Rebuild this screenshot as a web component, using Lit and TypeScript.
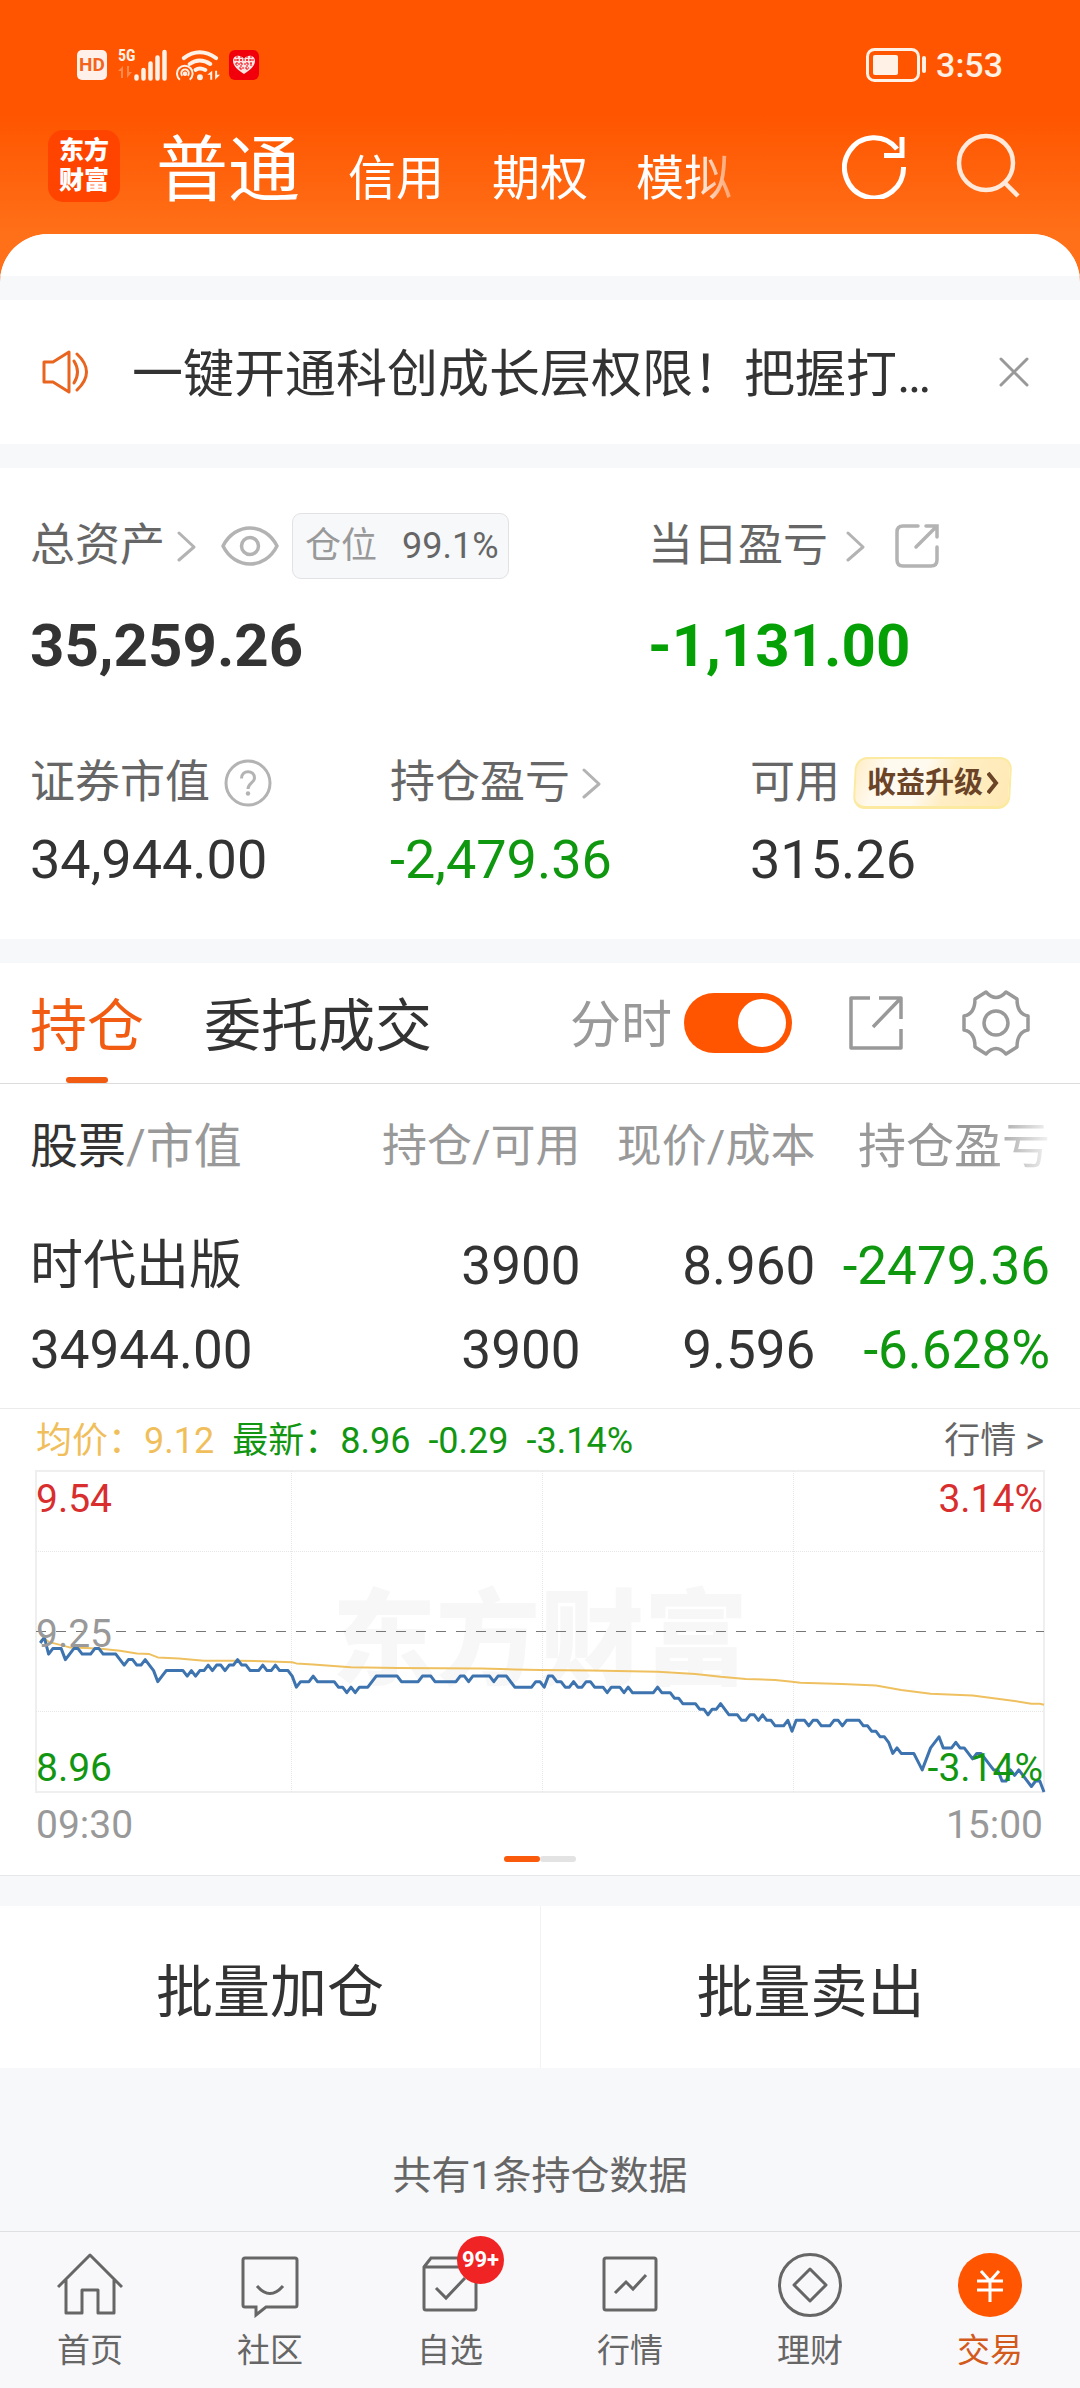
import { LitElement, html, svg, css } from "lit";
import { customElement, state } from "lit/decorators.js";

type Point = [minute: number, centsBelow: number];

/* Price line: trading minute, and cents below the previous close of 9.25. */
const PRICE: Point[] = [
  [1, 2], [2, 1], [3, 4], [4, 3], [6, 3], [7, 5], [8, 4], [9, 3], [10, 3], [11, 4], [13, 4], [14, 3], [15, 3], [16, 4],
  [19, 4], [21, 6], [22, 5], [23, 5], [24, 6], [25, 6], [26, 5], [27, 6], [28, 7], [29, 9], [30, 8], [31, 7], [35, 7],
  [36, 8], [37, 7], [38, 8], [39, 7], [40, 7], [41, 6], [42, 7], [43, 6], [44, 6], [45, 7], [46, 6], [47, 6], [48, 5],
  [49, 6], [50, 6], [51, 7], [53, 7], [54, 6], [55, 7], [56, 7], [57, 6], [58, 7], [60, 7], [61, 8], [62, 10], [63, 9],
  [65, 9], [66, 8], [67, 9], [71, 9], [72, 10], [73, 10], [74, 11], [75, 10], [76, 11], [77, 10], [79, 10], [81, 8],
  [86, 8], [87, 9], [91, 9], [92, 8], [94, 8], [95, 9], [100, 9], [101, 8], [102, 8], [103, 9], [104, 8], [108, 8],
  [109, 9], [110, 8], [112, 8], [114, 10], [118, 10], [119, 9], [120, 9], [121, 10], [122, 8], [123, 8], [124, 9],
  [125, 9], [126, 10], [127, 10], [128, 9], [129, 10], [130, 10], [131, 9], [132, 9], [133, 10], [135, 10], [136, 11],
  [137, 10], [139, 10], [140, 11], [141, 10], [142, 11], [147, 11], [148, 10], [149, 11], [151, 11], [152, 12],
  [153, 12], [154, 13], [157, 13], [158, 14], [159, 14], [160, 15], [161, 14], [162, 14], [163, 13], [165, 15],
  [167, 15], [168, 16], [169, 16], [170, 15], [171, 15], [172, 16], [173, 15], [174, 16], [175, 16], [176, 17],
  [178, 17], [179, 16], [180, 18], [181, 16], [183, 16], [184, 17], [185, 16], [186, 16], [187, 17], [189, 17],
  [190, 16], [191, 16], [192, 17], [193, 16], [196, 16], [197, 17], [198, 17], [199, 18], [200, 18], [201, 19],
  [202, 19], [203, 20], [204, 22], [205, 21], [206, 22], [209, 22], [211, 25], [213, 21], [215, 19], [216, 21],
  [218, 21], [219, 20], [220, 21], [221, 21], [223, 23], [224, 22], [225, 22], [227, 24], [228, 25], [229, 25],
  [230, 27], [231, 27], [232, 25], [233, 26], [234, 25], [235, 26], [237, 28], [238, 27], [239, 27], [240, 29],
];

const AVERAGE: Point[] = [
  [1, 1.6], [2, 1.2], [3, 1.8], [8, 2.8], [12, 2.9], [16, 3.1], [20, 3.4], [24, 3.9], [27, 4], [29, 4.6], [34, 4.8],
  [40, 5.2], [48, 5.2], [54, 5.3], [61, 5.5], [62, 5.7], [66, 5.9], [70, 6.1], [75, 6.4], [86, 6.5], [106, 6.6],
  [114, 6.8], [120, 6.9], [132, 7], [148, 7.2], [157, 7.6], [163, 8.1], [169, 8.5], [176, 8.7], [180, 9], [182, 9.2],
  [192, 9.4], [200, 9.7], [206, 10.5], [213, 11.2], [223, 11.5], [228, 12], [233, 12.5], [237, 13], [239, 13],
  [240, 13.2],
];

const CHART_W = 1008;
const CHART_H = 322;
const toPoints = (line: Point[]) =>
  line
    .map(([m, c]) => `${((m / 240) * CHART_W).toFixed(1)},${(CHART_H / 2 + (c / 29) * (CHART_H / 2 - 1)).toFixed(1)}`)
    .join(" ");

const shared = css`
  * {
    box-sizing: border-box;
  }
  button {
    appearance: none;
    border: 0;
    margin: 0;
    padding: 0;
    background: none;
    font: inherit;
    color: inherit;
    text-align: inherit;
    display: flex;
    align-items: center;
  }
  a {
    color: inherit;
    text-decoration: none;
  }
  svg {
    display: block;
    flex: none;
    fill: none;
    stroke: currentColor;
  }
`;

const chevron = html`<svg width="19" height="31" viewBox="0 0 19 31" color="#b3b3b3" stroke-width="3" stroke-linecap="round" stroke-linejoin="round" aria-hidden="true"><path d="M2 2 17 16 2 29" /></svg>`;

@customElement("status-bar")
class StatusBar extends LitElement {
  static styles = [
    shared,
    css`
      :host {
        display: flex;
        align-items: center;
        justify-content: space-between;
        height: 130px;
        padding: 0 77px;
        color: #fff1e6;
      }
      .group {
        display: flex;
        align-items: center;
        gap: 8px;
      }
      .time {
        font-size: 34px;
        line-height: 40px;
        font-weight: 500;
      }
      .hd {
        display: grid;
        place-items: center;
        width: 30px;
        height: 30px;
        border-radius: 5px;
        background: #fff1e9;
        color: #f4631d;
        font-size: 19px;
        line-height: 30px;
        font-weight: 700;
      }
      .cell {
        display: grid;
        grid-template-columns: 16px 34px;
        height: 32px;
        margin-left: 3px;
      }
      .net {
        font: 700 16px/14px "Roboto Condensed", Roboto, sans-serif;
      }
      .bars {
        grid-row: 1 / 3;
        grid-column: 2;
      }
    `,
  ];

  render() {
    return html`
      <div class="group">
        <span class="hd">HD</span>
        <span class="cell">
          <span class="net">5G</span>
          <svg class="bars" width="34" height="32" viewBox="0 0 34 32" stroke-width="4.5" stroke-linecap="round" aria-label="信号">
            <path d="M2.500 27.500v2M9.500 21v8.500M16.500 14.500v15M23.500 8.500v21M30.500 3v26.500" />
          </svg>
          <svg width="16" height="12" viewBox="0 0 16 12" color="#ff8a4d" aria-hidden="true">
            <path fill="#ff8a4d" stroke="none" d="M5 0v12H3V5H0zM9 0v12l5-6h-3V0z" />
          </svg>
        </span>
        <svg width="45" height="32" viewBox="0 0 46 32" aria-label="无线网络">
          <g stroke-width="4" stroke-linecap="round">
            <path d="M8 9Q24-3 41 9M14 15Q24 8 35 15M20 21Q24 18 30 21" />
          </g>
          <circle cx="24.500" cy="28.500" r="3" fill="currentColor" stroke="none" />
          <g stroke-width="2">
            <path d="M4 31A8 8 0 1 1 14 31M6.500 27A3.800 3.800 0 1 1 12 27" />
            <circle cx="9.200" cy="25" r="1.300" fill="currentColor" />
          </g>
          <path d="M37 22v9h-2v-5h-3zM40 22v9l5-5h-3v-4z" fill="currentColor" stroke="none" />
        </svg>
        <svg width="30" height="30" viewBox="0 0 30 30" aria-hidden="true">
          <rect width="30" height="30" rx="6" fill="#f1000b" stroke="none" />
          <path d="M15 24C9 20 4 16 4 11c0-6 8-7 11-2 3-5 11-4 11 2 0 5-5 9-11 13z" fill="#fbe3e2" stroke="none" />
          <path d="M8 6v10M12 6v15M18 6v15M22 6v10M5 10h20M6 14h18M10 18h10" stroke="#f1000b" stroke-width="1" stroke-dasharray="2 1" />
        </svg>
      </div>
      <div class="group">
        <svg width="62" height="34" viewBox="0 0 62 34" aria-label="电量">
          <rect x="1.500" y="1.500" width="51" height="31" rx="7" stroke-width="3" />
          <rect x="7" y="7" width="25" height="20" rx="2" fill="currentColor" stroke="none" />
          <path d="M58 10v13" stroke-width="4" stroke-linecap="round" />
        </svg>
        <span class="time">3:53</span>
      </div>
    `;
  }
}

@customElement("account-header")
class AccountHeader extends LitElement {
  static styles = [
    shared,
    css`
      :host {
        display: block;
        padding-bottom: 48px;
        color: #fff;
        background: linear-gradient(180deg, #ff5500 0, #ff5500 114px, #ff7018 234px);
      }
      .row {
        display: flex;
        align-items: flex-start;
        height: 104px;
        padding: 0 58px 0 48px;
      }
      .logo {
        flex: none;
        width: 72px;
        height: 72px;
        padding: 6px 0;
        border-radius: 15px;
        background: #ff4400;
        text-align: center;
        font-size: 25px;
        line-height: 30px;
        font-weight: 900;
      }
      .logo span {
        display: block;
      }
      .tabs {
        display: flex;
        align-items: baseline;
        gap: 48px;
        padding: 0 24px 0 36px;
        font-size: 48px;
        line-height: 82px;
        -webkit-mask-image: linear-gradient(90deg, #000 calc(100% - 64px), transparent);
        mask-image: linear-gradient(90deg, #000 calc(100% - 64px), transparent);
      }
      .tab[aria-selected="true"] {
        font-size: 72px;
      }
      .tools {
        display: flex;
        align-items: center;
        gap: 48px;
        height: 72px;
        margin-left: auto;
      }
    `,
  ];

  render() {
    const tabs = ["普通", "信用", "期权", "模拟"];
    return html`
      <status-bar></status-bar>
      <div class="row">
        <div class="logo"><span>东方</span><span>财富</span></div>
        <div class="tabs" role="tablist">
          ${tabs.map((t, i) => html`<button class="tab" role="tab" aria-selected=${i === 0 ? "true" : "false"}>${t}</button>`)}
        </div>
        <div class="tools">
          <button aria-label="刷新">
            <svg width="66" height="66" viewBox="0 0 66 66" stroke-width="5">
              <path d="M61.500 34A29.500 30 0 1 1 55 16" />
              <path d="M42 22.500H60V4" />
            </svg>
          </button>
          <button aria-label="搜索">
            <svg width="66" height="66" viewBox="0 0 66 66" color="#ffe9db" stroke-width="4.500">
              <circle cx="30" cy="30" r="27" />
              <path d="M48 49 62 63" />
            </svg>
          </button>
        </div>
      </div>
    `;
  }
}

@customElement("asset-summary")
class AssetSummary extends LitElement {
  static styles = [
    shared,
    css`
      :host {
        display: block;
        padding: 45px 0 47px 30px;
        background: #fff;
        color: #333;
      }
      .top,
      .rest {
        display: grid;
      }
      .top {
        grid-template-columns: 618fr 432fr;
        padding-bottom: 69px;
      }
      .rest {
        grid-template-columns: 360fr 360fr 330fr;
      }
      .label {
        display: flex;
        align-items: center;
        height: 66px;
        font-size: 45px;
        line-height: 66px;
        color: #666;
      }
      .title {
        gap: 12px;
      }
      .title.wide {
        gap: 18px;
      }
      .eye {
        margin: 0 12px 0 24px;
      }
      .share {
        margin-left: 28px;
      }
      .ratio {
        display: flex;
        gap: 25px;
        height: 66px;
        padding: 0 9px 0 12px;
        border: 1px solid #e2e2e4;
        border-radius: 9px;
        background: #f7f8fa;
        font-size: 36px;
        line-height: 64px;
      }
      .ratio span {
        color: #999;
      }
      .big {
        font-size: 60px;
        line-height: 70px;
        font-weight: 700;
        padding-top: 32px;
      }
      .value {
        font-size: 54px;
        line-height: 64px;
        padding-top: 12px;
      }
      .down {
        color: #05a005;
      }
      .mid {
        color: #0f970f;
      }
      .help {
        margin-left: 14px;
      }
      .promo {
        position: relative;
        isolation: isolate;
        gap: 4px;
        height: 52px;
        margin-left: 14px;
        padding: 0 12px 0 13px;
        font-size: 29px;
        line-height: 52px;
        font-weight: 700;
        color: #6b4428;
      }
      .promo::before {
        content: "";
        position: absolute;
        inset: 0;
        z-index: -1;
        border: 2px solid #fbeaa0;
        border-bottom-width: 3px;
        border-radius: 12px;
        background: linear-gradient(110deg, #ffedc6 0, #fffaf0 18%, #fffaf0 42%, #ffeec4 60%, #ffe9b5 100%);
        transform: skewX(-3deg);
      }
    `,
  ];

  render() {
    return html`
      <div class="top">
        <div>
          <div class="label">
            <button class="title">总资产${chevron}</button>
            <button class="eye" aria-label="隐藏金额">
              <svg width="60" height="42" viewBox="0 0 60 42" color="#b3b3b3" stroke-width="3.500">
                <path d="M3 21C15-3 45-3 57 21 45 45 15 45 3 21z" stroke-linejoin="round" />
                <circle cx="30" cy="21" r="8.500" />
              </svg>
            </button>
            <button class="ratio"><span>仓位</span>99.1%</button>
          </div>
          <div class="big">35,259.26</div>
        </div>
        <div>
          <div class="label">
            <button class="title wide">当日盈亏${chevron}</button>
            <button class="share" aria-label="分享">
              <svg width="48" height="48" viewBox="0 0 48 48" color="#b3b3b3" stroke-width="3.500" stroke-linecap="round">
                <path d="M25 4H10Q4 4 4 10V38Q4 44 10 44H38Q44 44 44 38V25" />
                <path d="M33 4H44V15M43 5 23 25" />
              </svg>
            </button>
          </div>
          <div class="big down">-1,131.00</div>
        </div>
      </div>
      <div class="rest">
        <div>
          <div class="label">
            证券市值
            <button class="help" aria-label="说明">
              <svg width="48" height="48" viewBox="0 0 48 48" color="#b3b3b3" stroke-width="3">
                <circle cx="24" cy="24" r="22" />
                <path d="M17.500 19.500C17.500 10.500 30.500 10.500 30.500 19 30.500 24 24 24 24 30" />
                <circle cx="24" cy="34.500" r="2.200" fill="#b3b3b3" stroke="none" />
              </svg>
            </button>
          </div>
          <div class="value">34,944.00</div>
        </div>
        <div>
          <div class="label"><button class="title">持仓盈亏${chevron}</button></div>
          <div class="value mid">-2,479.36</div>
        </div>
        <div>
          <div class="label">
            可用
            <button class="promo">
              收益升级
              <svg width="12" height="22" viewBox="0 0 12 22" stroke-width="4"><path d="M1 1 9 11 1 21" /></svg>
            </button>
          </div>
          <div class="value">315.26</div>
        </div>
      </div>
    `;
  }
}

@customElement("intraday-chart")
class IntradayChart extends LitElement {
  static styles = [
    shared,
    css`
      :host {
        display: block;
        padding: 10px 36px 13px;
        font-size: 39px;
        line-height: 46px;
        color: #999;
      }
      .info {
        display: flex;
        gap: 18px;
        height: 52px;
        font-size: 36px;
        line-height: 42px;
        color: #129612;
        padding-top: 1px;
      }
      .average {
        color: #f0bf5c;
      }
      .more {
        margin-left: auto;
        color: #666;
      }
      .plot {
        position: relative;
        height: 322px;
      }
      .plot svg {
        position: absolute;
        inset: 0;
        width: 100%;
        height: 100%;
        overflow: visible;
      }
      .watermark {
        display: grid;
        place-items: center;
        height: 100%;
        font-family: "Noto Sans CJK SC", sans-serif;
        font-size: 104px;
        line-height: 114px;
        font-weight: 900;
        color: #f7f7f7;
      }
      .scale {
        position: absolute;
        inset: 5px 1px 2px 0;
        display: flex;
        flex-direction: column;
        justify-content: space-between;
      }
      .right {
        align-items: flex-end;
      }
      .high {
        color: #d92e2e;
      }
      .low {
        color: #129612;
      }
      .times {
        display: flex;
        justify-content: space-between;
        padding: 9px 1px 0 0;
      }
      .pager {
        display: flex;
        justify-content: center;
        padding-top: 8px;
      }
      .pager i {
        width: 36px;
        height: 6px;
        border-radius: 3px;
        background: #e3e3e3;
      }
      .pager .on {
        background: #f95a0c;
      }
    `,
  ];

  render() {
    const columns = [255, 506, 757];
    return html`
      <div class="info">
        <span class="average">均价：9.12</span>
        <span>最新：8.96</span>
        <span>-0.29</span>
        <span>-3.14%</span>
        <a class="more" href="#quote">行情 &gt;</a>
      </div>
      <div class="plot">
        <div class="watermark">东方财富</div>
        <svg viewBox="0 0 1008 322" preserveAspectRatio="none" role="img" aria-label="分时走势">
          <rect x="0" y="0" width="1008" height="321" stroke="#efefef" stroke-width="2" />
          <g stroke="#e6e6e6" stroke-dasharray="1 1">
            <path d="M0 80.500H1008M0 240.500H1008" />
            ${columns.map((x) => svg`<path d="M${x}.5 0V321" />`)}
          </g>
          <path d="M0 160.500H1008" stroke="#777" stroke-dasharray="10 10" />
          <g stroke-linejoin="round">
            <polyline points=${toPoints(AVERAGE)} stroke="#efc060" stroke-width="2" />
            <polyline points=${toPoints(PRICE)} stroke="#3d73ae" stroke-width="3" />
          </g>
        </svg>
        <div class="scale">
          <span class="high">9.54</span>
          <span>9.25</span>
          <span class="low">8.96</span>
        </div>
        <div class="scale right">
          <span class="high">3.14%</span>
          <span class="low">-3.14%</span>
        </div>
      </div>
      <div class="times"><span>09:30</span><span>15:00</span></div>
      <div class="pager"><i class="on"></i><i></i></div>
    `;
  }
}

@customElement("holdings-panel")
class HoldingsPanel extends LitElement {
  @state() private showChart = true;

  static styles = [
    shared,
    css`
      :host {
        display: block;
        background: #fff;
        color: #333;
        border-bottom: 1px solid #e6e7e9;
      }
      .bar {
        display: flex;
        align-items: center;
        height: 121px;
        padding: 0 50px 0 30px;
        border-bottom: 1px solid #dcdcdc;
      }
      .tab {
        position: relative;
        height: 120px;
        margin-right: 60px;
        padding-top: 8px;
        font-size: 57px;
        line-height: 112px;
      }
      .tab[aria-selected="true"] {
        color: #f25c12;
      }
      .tab[aria-selected="true"]::after {
        content: "";
        position: absolute;
        left: calc(50% - 21px);
        bottom: 0;
        width: 42px;
        height: 6px;
        border-radius: 3px;
        background: #f25c12;
      }
      .switch {
        display: flex;
        align-items: center;
        gap: 12px;
        margin-left: auto;
        padding-top: 5px;
        font-size: 51px;
        line-height: 66px;
        color: #999;
      }
      .switch input {
        appearance: none;
        display: flex;
        align-items: center;
        width: 108px;
        height: 60px;
        margin: 0 0 6px;
        padding: 0 6px;
        border-radius: 30px;
        background: #ccc;
      }
      .switch input::before {
        content: "";
        width: 48px;
        height: 48px;
        border-radius: 50%;
        background: #fff;
      }
      .switch input:checked {
        justify-content: flex-end;
        background: #ff5500;
      }
      .tool {
        margin: 0 0 1px 55px;
        color: #999;
      }
      table {
        width: 100%;
        border-collapse: collapse;
        table-layout: fixed;
        border-bottom: 1px solid #ebebeb;
      }
      th {
        height: 125px;
        padding: 0;
        font-size: 45px;
        line-height: 60px;
        font-weight: 400;
        text-align: right;
        white-space: nowrap;
        color: #999;
      }
      td {
        padding: 15px 0 16px;
        font-size: 53px;
        line-height: 84px;
        text-align: right;
      }
      .first {
        width: 32%;
        padding-left: 30px;
        text-align: left;
      }
      .last {
        width: 24.5%;
        padding-right: 30px;
      }
      th.first,
      th.last {
        font-size: 48px;
      }
      th.last span {
        -webkit-mask-image: linear-gradient(90deg, #000 68%, transparent 104%);
        mask-image: linear-gradient(90deg, #000 68%, transparent 104%);
      }
      .strong {
        color: #333;
      }
      td div {
        height: 84px;
      }
      .down {
        color: #0f970f;
      }
    `,
  ];

  render() {
    return html`
      <div class="bar">
        <button class="tab" role="tab" aria-selected="true">持仓</button>
        <button class="tab" role="tab" aria-selected="false">委托成交</button>
        <label class="switch">
          分时
          <input type="checkbox" role="switch" .checked=${this.showChart} @change=${(e: Event) => (this.showChart = (e.target as HTMLInputElement).checked)} />
        </label>
        <button class="tool" aria-label="分享持仓">
          <svg width="60" height="60" viewBox="0 0 60 60" stroke-width="3.500" stroke-linejoin="round">
            <path d="M23 5H4V55H54V36M32 5H54V26M53 6 26 34" />
          </svg>
        </button>
        <button class="tool" aria-label="设置">
          <svg width="68" height="66" viewBox="-34 -33 68 66" stroke-width="3.500" stroke-linejoin="round">
            <path d="M-10-31Q0-20 10-31L21-24Q21-9 32-7V7Q21 9 21 24L10 31Q0 20-10 31L-21 24Q-21 9-32 7V-7Q-21-9-21-24z" />
            <circle r="12" />
          </svg>
        </button>
      </div>
      <table>
        <thead>
          <tr>
            <th class="first" scope="col"><span class="strong">股票</span>/市值</th>
            <th scope="col">持仓/可用</th>
            <th scope="col">现价/成本</th>
            <th class="last" scope="col"><span>持仓盈亏</span></th>
          </tr>
        </thead>
        <tbody>
          <tr>
            <td class="first"><div>时代出版</div><div>34944.00</div></td>
            <td><div>3900</div><div>3900</div></td>
            <td><div>8.960</div><div>9.596</div></td>
            <td class="last down"><div>-2479.36</div><div>-6.628%</div></td>
          </tr>
        </tbody>
      </table>
      ${this.showChart ? html`<intraday-chart></intraday-chart>` : null}
    `;
  }
}

@customElement("bottom-nav")
class BottomNav extends LitElement {
  static styles = [
    shared,
    css`
      :host {
        display: block;
        border-top: 1px solid #dfe0e2;
        background: #f8f8fa;
      }
      nav {
        display: grid;
        grid-template-columns: repeat(6, 1fr);
      }
      .item {
        display: flex;
        flex-direction: column;
        align-items: center;
        gap: 12px;
        height: 156px;
        padding-top: 20px;
        font-size: 33px;
        line-height: 42px;
        color: #666;
      }
      .active {
        color: #d25a1c;
      }
      .icon {
        position: relative;
      }
      .count {
        position: absolute;
        left: 40px;
        top: -16px;
        width: 47px;
        height: 48px;
        border-radius: 50%;
        background: #f02424;
        color: #fff;
        text-align: center;
        font-size: 22px;
        line-height: 48px;
        font-weight: 700;
      }
    `,
  ];

  render() {
    const items = [
      {
        label: "首页",
        icon: svg`<path d="M1 35 33 3 65 35M9 28V61H25V38H41V61H57V28" stroke-linejoin="round" />`,
      },
      {
        label: "社区",
        icon: svg`<path d="M8 6H58Q60 6 60 8V53Q60 55 58 55H29L19 63V55H8Q6 55 6 53V8Q6 6 8 6zM20 34Q33 49 46 34" />`,
      },
      {
        label: "自选",
        count: "99+",
        icon: svg`<path d="M7 15 14 6H53L59 15V56Q59 58 57 58H9Q7 58 7 56zM7 15H59M19 36 29 46 48 26" />`,
      },
      {
        label: "行情",
        icon: svg`<rect x="7" y="6" width="52" height="52" rx="2" /><path d="M18 41 29 30 36 37 49 23" />`,
      },
      {
        label: "理财",
        icon: svg`<circle cx="33" cy="33" r="30.500" /><path d="M33 17 49 33 33 49 17 33z" stroke-linejoin="round" />`,
      },
      {
        label: "交易",
        active: true,
        icon: svg`<circle cx="33" cy="33" r="32" fill="#ff5500" stroke="none" /><path d="M24 19 33 29 42 19M33 29V50M20 29H46M20 38H46" stroke="#fff" />`,
      },
    ];
    return html`
      <nav>
        ${items.map(
          (it) => html`
            <a class="item ${it.active ? "active" : ""}" href="#${it.label}">
              <span class="icon">
                <svg width="66" height="66" viewBox="0 0 66 66" stroke-width="3" aria-hidden="true">${it.icon}</svg>
                ${it.count ? html`<span class="count">${it.count}</span>` : null}
              </span>
              <span>${it.label}</span>
            </a>
          `
        )}
      </nav>
    `;
  }
}

@customElement("app-root")
class AppRoot extends LitElement {
  static styles = [
    shared,
    css`
      :host {
        display: flex;
        flex-direction: column;
        min-height: 100vh;
        background: #f7f8fa;
        font-family: Roboto, "Noto Sans CJK SC", sans-serif;
      }
      .sheet {
        display: flex;
        flex-direction: column;
        gap: 24px;
        margin-top: -48px;
        border-radius: 48px 48px 0 0;
        overflow: hidden;
        background: #f7f8fa;
      }
      .lip {
        height: 42px;
        background: #fff;
      }
      .notice {
        display: flex;
        align-items: center;
        height: 144px;
        padding: 0 48px 0 42px;
        background: #fff;
        color: #333;
      }
      .text {
        flex: 1;
        padding: 6px 0 0 42px;
        font-size: 51px;
        line-height: 72px;
        white-space: nowrap;
        overflow: hidden;
      }
      .actions {
        display: grid;
        grid-template-columns: 1fr 1fr;
        margin-top: 30px;
        background: #fff;
        color: #333;
      }
      .action {
        justify-content: center;
        height: 162px;
        font-size: 57px;
      }
      .action + .action {
        border-left: 1px solid #f3f3f5;
      }
      .total {
        margin: 0;
        padding: 82px 0 28px;
        text-align: center;
        font-size: 39px;
        line-height: 52px;
        color: #666;
      }
      bottom-nav {
        margin-top: auto;
      }
    `,
  ];

  render() {
    return html`
      <account-header></account-header>
      <div class="sheet">
        <div class="lip"></div>
        <div class="notice">
          <svg width="48" height="44" viewBox="0 0 48 44" color="#e8641f" stroke-width="3" stroke-linecap="round" stroke-linejoin="round" aria-hidden="true">
            <path d="M2 12H11L27 2V42L11 32H2zM32 11Q39 22 32 33M35 4Q54 22 35 40" />
          </svg>
          <span class="text">一键开通科创成长层权限！把握打…</span>
          <button aria-label="关闭">
            <svg width="36" height="36" viewBox="0 0 36 36" color="#999" stroke-width="3" stroke-linecap="round"><path d="M5 5 31 31M31 5 5 31" /></svg>
          </button>
        </div>
        <asset-summary></asset-summary>
        <holdings-panel></holdings-panel>
      </div>
      <div class="actions">
        <button class="action">批量加仓</button>
        <button class="action">批量卖出</button>
      </div>
      <p class="total">共有1条持仓数据</p>
      <bottom-nav></bottom-nav>
    `;
  }
}
